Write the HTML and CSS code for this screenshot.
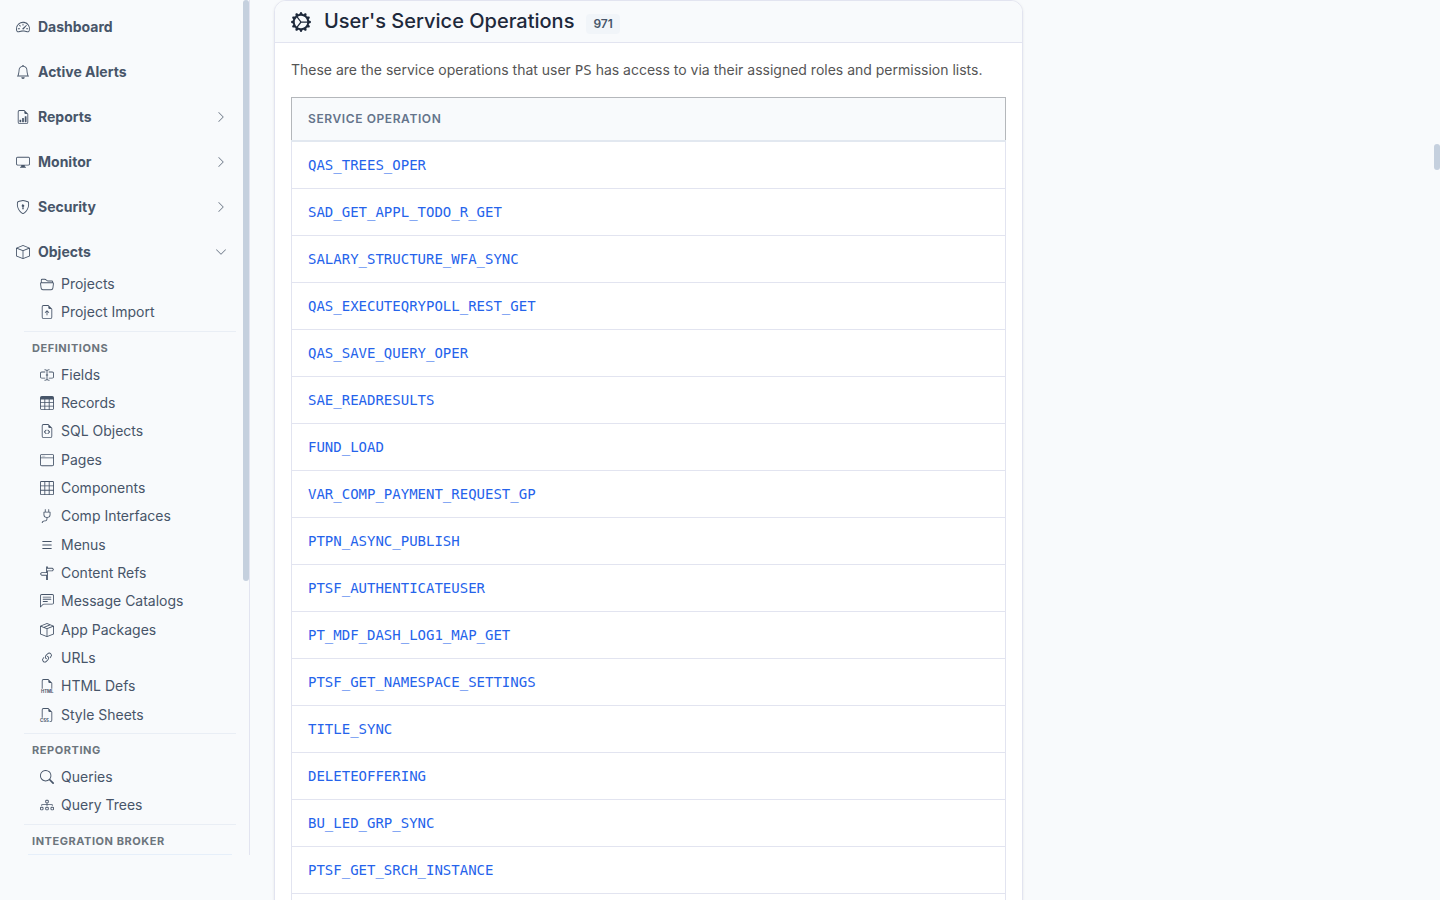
FILE: index.html
```html
<!DOCTYPE html>
<html lang="en">
<head>
    <meta charset="utf-8">
    <meta name="viewport" content="width=device-width, initial-scale=1">
    <title>User's Service Operations</title>
    <link rel="stylesheet" href="styles.css">
</head>
<body>
    <div class="layout">
        <aside class="sidebar">
            <nav class="sidebar-nav">
                <ul class="menu">
                    <li>
                        <a href="#" class="menu-link">
                            <svg class="icon" viewBox="0 0 16 16"><path d="M8 4a.5.5 0 0 1 .5.5V6a.5.5 0 0 1-1 0V4.5A.5.5 0 0 1 8 4M3.732 5.732a.5.5 0 0 1 .707 0l.915.914a.5.5 0 1 1-.708.708l-.914-.915a.5.5 0 0 1 0-.707M2 10a.5.5 0 0 1 .5-.5h1.586a.5.5 0 0 1 0 1H2.5A.5.5 0 0 1 2 10m9.5 0a.5.5 0 0 1 .5-.5h1.5a.5.5 0 0 1 0 1H12a.5.5 0 0 1-.5-.5m.754-4.246a.39.39 0 0 0-.527-.02L7.547 9.31a.91.91 0 1 0 1.302 1.258l3.434-4.297a.39.39 0 0 0-.029-.518z"/><path fill-rule="evenodd" d="M0 10a8 8 0 1 1 15.547 2.661c-.442 1.253-1.845 1.602-2.932 1.25C11.309 13.488 9.475 13 8 13c-1.474 0-3.31.488-4.615.911-1.087.352-2.49.003-2.932-1.25A8 8 0 0 1 0 10m8-7a7 7 0 0 0-6.603 9.329c.203.575.923.876 1.68.63C4.397 12.533 6.358 12 8 12s3.604.532 4.923.96c.757.245 1.477-.056 1.68-.631A7 7 0 0 0 8 3"/></svg>
                            <span>Dashboard</span>
                        </a>
                    </li>
                    <li>
                        <a href="#" class="menu-link">
                            <svg class="icon" viewBox="0 0 16 16"><path d="M8 16a2 2 0 0 0 2-2H6a2 2 0 0 0 2 2M8 1.918l-.797.161A4 4 0 0 0 4 6c0 .628-.134 2.197-.459 3.742-.16.767-.376 1.566-.663 2.258h10.244c-.287-.692-.502-1.49-.663-2.258C12.134 8.197 12 6.628 12 6a4 4 0 0 0-3.203-3.92zM14.22 12c.223.447.481.801.78 1H1c.299-.199.557-.553.78-1C2.68 10.2 3 6.88 3 6c0-2.42 1.72-4.44 4.005-4.901a1 1 0 1 1 1.99 0A5 5 0 0 1 13 6c0 .88.32 4.2 1.22 6"/></svg>
                            <span>Active Alerts</span>
                        </a>
                    </li>
                    <li>
                        <button type="button" class="menu-link" aria-expanded="false">
                            <svg class="icon" viewBox="0 0 16 16"><path d="M10 13.5a.5.5 0 0 0 .5.5h1a.5.5 0 0 0 .5-.5v-6a.5.5 0 0 0-.5-.5h-1a.5.5 0 0 0-.5.5zm-2.5.5a.5.5 0 0 1-.5-.5v-4a.5.5 0 0 1 .5-.5h1a.5.5 0 0 1 .5.5v4a.5.5 0 0 1-.5.5zm-3 0a.5.5 0 0 1-.5-.5v-2a.5.5 0 0 1 .5-.5h1a.5.5 0 0 1 .5.5v2a.5.5 0 0 1-.5.5z"/><path d="M14 14V4.5L9.5 0H4a2 2 0 0 0-2 2v12a2 2 0 0 0 2 2h8a2 2 0 0 0 2-2M9.5 3A1.5 1.5 0 0 0 11 4.5h2V14a1 1 0 0 1-1 1H4a1 1 0 0 1-1-1V2a1 1 0 0 1 1-1h5.5z"/></svg>
                            <span>Reports</span>
                            <svg class="chevron" viewBox="0 0 16 16"><path d="M4.646 1.646a.5.5 0 0 1 .708 0l6 6a.5.5 0 0 1 0 .708l-6 6a.5.5 0 0 1-.708-.708L10.293 8 4.646 2.354a.5.5 0 0 1 0-.708"/></svg>
                        </button>
                    </li>
                    <li>
                        <button type="button" class="menu-link" aria-expanded="false">
                            <svg class="icon" viewBox="0 0 16 16"><path d="M0 4s0-2 2-2h12s2 0 2 2v6s0 2-2 2h-4q0 1 .25 1.5H11a.5.5 0 0 1 0 1H5a.5.5 0 0 1 0-1h.75Q6 13 6 12H2s-2 0-2-2zm1.398-.855a.8.8 0 0 0-.254.302A1.5 1.5 0 0 0 1 4.01V10c0 .325.078.502.145.602q.105.156.302.254a1.5 1.5 0 0 0 .538.143L2.01 11H14c.325 0 .502-.078.602-.145a.8.8 0 0 0 .254-.302 1.5 1.5 0 0 0 .143-.538L15 9.99V4c0-.325-.078-.502-.145-.602a.8.8 0 0 0-.302-.254A1.5 1.5 0 0 0 13.99 3H2c-.325 0-.502.078-.602.145"/></svg>
                            <span>Monitor</span>
                            <svg class="chevron" viewBox="0 0 16 16"><path d="M4.646 1.646a.5.5 0 0 1 .708 0l6 6a.5.5 0 0 1 0 .708l-6 6a.5.5 0 0 1-.708-.708L10.293 8 4.646 2.354a.5.5 0 0 1 0-.708"/></svg>
                        </button>
                    </li>
                    <li>
                        <button type="button" class="menu-link" aria-expanded="false">
                            <svg class="icon" viewBox="0 0 16 16"><path d="M5.338 1.59a61 61 0 0 0-2.837.856.48.48 0 0 0-.328.39c-.554 4.157.726 7.19 2.253 9.188a10.7 10.7 0 0 0 2.287 2.233c.346.244.652.42.893.533q.18.085.293.118a1 1 0 0 0 .101.025 1 1 0 0 0 .1-.025q.114-.034.294-.118c.24-.113.547-.29.893-.533a10.7 10.7 0 0 0 2.287-2.233c1.527-1.997 2.807-5.031 2.253-9.188a.48.48 0 0 0-.328-.39c-.651-.213-1.75-.56-2.837-.855C9.552 1.29 8.531 1.067 8 1.067c-.53 0-1.552.223-2.662.524zM5.072.56C6.157.265 7.31 0 8 0s1.843.265 2.928.56c1.11.3 2.229.655 2.887.87a1.54 1.54 0 0 1 1.044 1.262c.596 4.477-.787 7.795-2.465 9.99a11.8 11.8 0 0 1-2.517 2.453 7 7 0 0 1-1.048.625c-.28.132-.581.24-.829.24s-.548-.108-.829-.24a7 7 0 0 1-1.048-.625 11.8 11.8 0 0 1-2.517-2.453C1.928 10.487.545 7.169 1.141 2.692A1.54 1.54 0 0 1 2.185 1.43 63 63 0 0 1 5.072.56"/><path d="M9.5 6.5a1.5 1.5 0 0 1-1 1.415l.385 1.99a.5.5 0 0 1-.491.595h-.788a.5.5 0 0 1-.49-.595l.384-1.99a1.5 1.5 0 1 1 2-1.415"/></svg>
                            <span>Security</span>
                            <svg class="chevron" viewBox="0 0 16 16"><path d="M4.646 1.646a.5.5 0 0 1 .708 0l6 6a.5.5 0 0 1 0 .708l-6 6a.5.5 0 0 1-.708-.708L10.293 8 4.646 2.354a.5.5 0 0 1 0-.708"/></svg>
                        </button>
                    </li>
                    <li>
                        <button type="button" class="menu-link" aria-expanded="true">
                            <svg class="icon" viewBox="0 0 16 16"><path d="M8.186 1.113a.5.5 0 0 0-.372 0L1.846 3.5 8 5.961 14.154 3.5zM15 4.239l-6.5 2.6v7.922l6.5-2.6V4.24zM7.5 14.762V6.838L1 4.239v7.923zM7.443.184a1.5 1.5 0 0 1 1.114 0l7.129 2.852A.5.5 0 0 1 16 3.5v8.662a1 1 0 0 1-.629.928l-7.185 2.874a.5.5 0 0 1-.372 0L.63 13.09a1 1 0 0 1-.63-.928V3.5a.5.5 0 0 1 .314-.464z"/></svg>
                            <span>Objects</span>
                            <svg class="chevron" viewBox="0 0 16 16"><path d="M1.646 4.646a.5.5 0 0 1 .708 0L8 10.293l5.646-5.647a.5.5 0 0 1 .708.708l-6 6a.5.5 0 0 1-.708 0l-6-6a.5.5 0 0 1 0-.708"/></svg>
                        </button>
                        <ul class="submenu">
                            <li><a href="#" class="submenu-link">
                                <svg class="icon" viewBox="0 0 16 16"><path d="M1 3.5A1.5 1.5 0 0 1 2.5 2h2.764c.958 0 1.76.56 2.311 1.184C7.985 3.648 8.48 4 9 4h4.5A1.5 1.5 0 0 1 15 5.5v.64c.57.265.94.876.856 1.546l-.64 5.124A2.5 2.5 0 0 1 12.733 15H3.266a2.5 2.5 0 0 1-2.481-2.19l-.64-5.124A1.5 1.5 0 0 1 1 6.14zM2 6h12v-.5a.5.5 0 0 0-.5-.5H9c-.964 0-1.71-.629-2.174-1.154C6.374 3.334 5.82 3 5.264 3H2.5a.5.5 0 0 0-.5.5zm-.367 1a.5.5 0 0 0-.496.562l.64 5.124A1.5 1.5 0 0 0 3.266 14h9.468a1.5 1.5 0 0 0 1.489-1.314l.64-5.124A.5.5 0 0 0 14.367 7z"/></svg>
                                <span>Projects</span></a></li>
                            <li><a href="#" class="submenu-link">
                                <svg class="icon" viewBox="0 0 16 16"><path d="M8.5 11.5a.5.5 0 0 1-1 0V7.707L6.354 8.854a.5.5 0 1 1-.708-.708l2-2a.5.5 0 0 1 .708 0l2 2a.5.5 0 0 1-.708.708L8.5 7.707z"/><path d="M14 14V4.5L9.5 0H4a2 2 0 0 0-2 2v12a2 2 0 0 0 2 2h8a2 2 0 0 0 2-2M9.5 3A1.5 1.5 0 0 0 11 4.5h2V14a1 1 0 0 1-1 1H4a1 1 0 0 1-1-1V2a1 1 0 0 1 1-1h5.5z"/></svg>
                                <span>Project Import</span></a></li>
                            <li class="submenu-title">Definitions</li>
                            <li><a href="#" class="submenu-link">
                                <svg class="icon" viewBox="0 0 16 16"><path d="M5 2a.5.5 0 0 1 .5-.5c.862 0 1.573.287 2.06.566.174.099.321.198.44.286.119-.088.266-.187.44-.286A4.17 4.17 0 0 1 10.5 1.5a.5.5 0 0 1 0 1c-.638 0-1.177.213-1.564.434a3.5 3.5 0 0 0-.436.294V7.5H9a.5.5 0 0 1 0 1h-.5v4.272c.1.08.248.187.436.294.387.221.926.434 1.564.434a.5.5 0 0 1 0 1 4.17 4.17 0 0 1-2.06-.566A5 5 0 0 1 8 13.65a5 5 0 0 1-.44.285 4.17 4.17 0 0 1-2.06.566.5.5 0 0 1 0-1c.638 0 1.177-.213 1.564-.434.188-.107.335-.214.436-.294V8.5H7a.5.5 0 0 1 0-1h.5V3.228a3.5 3.5 0 0 0-.436-.294A3.17 3.17 0 0 0 5.5 2.5.5.5 0 0 1 5 2"/><path d="M10 5h4a1 1 0 0 1 1 1v4a1 1 0 0 1-1 1h-4v1h4a2 2 0 0 0 2-2V6a2 2 0 0 0-2-2h-4zM6 5V4H2a2 2 0 0 0-2 2v4a2 2 0 0 0 2 2h4v-1H2a1 1 0 0 1-1-1V6a1 1 0 0 1 1-1z"/></svg>
                                <span>Fields</span></a></li>
                            <li><a href="#" class="submenu-link">
                                <svg class="icon" viewBox="0 0 16 16"><path d="M0 2a2 2 0 0 1 2-2h12a2 2 0 0 1 2 2v12a2 2 0 0 1-2 2H2a2 2 0 0 1-2-2zm15 2h-4v3h4zm0 4h-4v3h4zm0 4h-4v3h3a1 1 0 0 0 1-1zm-5 3v-3H6v3zm-5 0v-3H1v2a1 1 0 0 0 1 1zm-4-4h4V8H1zm0-4h4V4H1zm5-3v3h4V4zm4 4H6v3h4z"/></svg>
                                <span>Records</span></a></li>
                            <li><a href="#" class="submenu-link">
                                <svg class="icon" viewBox="0 0 16 16"><path d="M14 4.5V14a2 2 0 0 1-2 2H4a2 2 0 0 1-2-2V2a2 2 0 0 1 2-2h5.5zm-3 0A1.5 1.5 0 0 1 9.5 3V1H4a1 1 0 0 0-1 1v12a1 1 0 0 0 1 1h8a1 1 0 0 0 1-1V4.5z"/><path d="M8.646 6.646a.5.5 0 0 1 .708 0l2 2a.5.5 0 0 1 0 .708l-2 2a.5.5 0 0 1-.708-.708L10.293 9 8.646 7.354a.5.5 0 0 1 0-.708m-1.292 0a.5.5 0 0 0-.708 0l-2 2a.5.5 0 0 0 0 .708l2 2a.5.5 0 0 0 .708-.708L5.707 9l1.647-1.646a.5.5 0 0 0 0-.708"/></svg>
                                <span>SQL Objects</span></a></li>
                            <li><a href="#" class="submenu-link">
                                <svg class="icon" viewBox="0 0 16 16"><path d="M2.5 4a.5.5 0 1 0 0-1 .5.5 0 0 0 0 1m2-.5a.5.5 0 1 1-1 0 .5.5 0 0 1 1 0m1 .5a.5.5 0 1 0 0-1 .5.5 0 0 0 0 1"/><path d="M2 1a2 2 0 0 0-2 2v10a2 2 0 0 0 2 2h12a2 2 0 0 0 2-2V3a2 2 0 0 0-2-2zm13 2v2H1V3a1 1 0 0 1 1-1h12a1 1 0 0 1 1 1M2 14a1 1 0 0 1-1-1V6h14v7a1 1 0 0 1-1 1z"/></svg>
                                <span>Pages</span></a></li>
                            <li><a href="#" class="submenu-link">
                                <svg class="icon" viewBox="0 0 16 16"><path d="M0 1.5A1.5 1.5 0 0 1 1.5 0h13A1.5 1.5 0 0 1 16 1.5v13a1.5 1.5 0 0 1-1.5 1.5h-13A1.5 1.5 0 0 1 0 14.5zM1.5 1a.5.5 0 0 0-.5.5V5h4V1zM5 6H1v4h4zm1 4h4V6H6zm-1 1H1v3.5a.5.5 0 0 0 .5.5H5zm1 0v4h4v-4zm5 0v4h3.5a.5.5 0 0 0 .5-.5V11zm0-1h4V6h-4zm0-5h4V1.5a.5.5 0 0 0-.5-.5H11zm-1 0V1H6v4z"/></svg>
                                <span>Components</span></a></li>
                            <li><a href="#" class="submenu-link">
                                <svg class="icon" viewBox="0 0 16 16"><path d="M6 0a.5.5 0 0 1 .5.5V3h3V.5a.5.5 0 0 1 1 0V3h1a.5.5 0 0 1 .5.5v3A3.5 3.5 0 0 1 8.5 10c-.002.434-.01.845-.04 1.22-.041.514-.126 1.003-.317 1.424a2.08 2.08 0 0 1-.97 1.028C6.725 13.9 6.169 14 5.5 14c-.998 0-1.61.33-1.974.718A1.92 1.92 0 0 0 3 16H2c0-.616.232-1.367.797-1.968C3.374 13.42 4.261 13 5.5 13c.581 0 .962-.088 1.218-.219.241-.123.4-.3.514-.55.121-.266.193-.621.23-1.09.027-.34.035-.718.037-1.141A3.5 3.5 0 0 1 4 6.5v-3a.5.5 0 0 1 .5-.5h1V.5A.5.5 0 0 1 6 0M5 4v2.5A2.5 2.5 0 0 0 7.5 9h1A2.5 2.5 0 0 0 11 6.5V4z"/></svg>
                                <span>Comp Interfaces</span></a></li>
                            <li><a href="#" class="submenu-link">
                                <svg class="icon" viewBox="0 0 16 16"><path d="M2.5 12a.5.5 0 0 1 .5-.5h10a.5.5 0 0 1 0 1H3a.5.5 0 0 1-.5-.5m0-4a.5.5 0 0 1 .5-.5h10a.5.5 0 0 1 0 1H3a.5.5 0 0 1-.5-.5m0-4a.5.5 0 0 1 .5-.5h10a.5.5 0 0 1 0 1H3a.5.5 0 0 1-.5-.5"/></svg>
                                <span>Menus</span></a></li>
                            <li><a href="#" class="submenu-link">
                                <svg class="icon" viewBox="0 0 16 16"><path d="M7 7V1.414a1 1 0 0 1 2 0V2h5a1 1 0 0 1 .8.4l.975 1.3a.5.5 0 0 1 0 .6L14.8 5.6a1 1 0 0 1-.8.4H9v10H7v-5H2a1 1 0 0 1-.8-.4L.225 9.3a.5.5 0 0 1 0-.6L1.2 7.4A1 1 0 0 1 2 7zm1 3V8H2l-.75 1L2 10zm0-5h6l.75-1L14 3H8z"/></svg>
                                <span>Content Refs</span></a></li>
                            <li><a href="#" class="submenu-link">
                                <svg class="icon" viewBox="0 0 16 16"><path d="M14 1a1 1 0 0 1 1 1v8a1 1 0 0 1-1 1H4.414A2 2 0 0 0 3 11.586l-2 2V2a1 1 0 0 1 1-1zM2 0a2 2 0 0 0-2 2v12.793a.5.5 0 0 0 .854.353l2.853-2.853A1 1 0 0 1 4.414 12H14a2 2 0 0 0 2-2V2a2 2 0 0 0-2-2z"/><path d="M3 3.5a.5.5 0 0 1 .5-.5h9a.5.5 0 0 1 0 1h-9a.5.5 0 0 1-.5-.5M3 6a.5.5 0 0 1 .5-.5h9a.5.5 0 0 1 0 1h-9A.5.5 0 0 1 3 6m0 2.5a.5.5 0 0 1 .5-.5h5a.5.5 0 0 1 0 1h-5a.5.5 0 0 1-.5-.5"/></svg>
                                <span>Message Catalogs</span></a></li>
                            <li><a href="#" class="submenu-link">
                                <svg class="icon" viewBox="0 0 16 16"><path d="M8.186 1.113a.5.5 0 0 0-.372 0L1.846 3.5l2.404.961L10.404 2zm3.564 1.426L5.596 5 8 5.961 14.154 3.5zm3.25 1.7-6.5 2.6v7.922l6.5-2.6V4.24zM7.5 14.762V6.838L1 4.239v7.923zM7.443.184a1.5 1.5 0 0 1 1.114 0l7.129 2.852A.5.5 0 0 1 16 3.5v8.662a1 1 0 0 1-.629.928l-7.185 2.874a.5.5 0 0 1-.372 0L.63 13.09a1 1 0 0 1-.63-.928V3.5a.5.5 0 0 1 .314-.464z"/></svg>
                                <span>App Packages</span></a></li>
                            <li><a href="#" class="submenu-link">
                                <svg class="icon" viewBox="0 0 16 16"><path d="M4.715 6.542 3.343 7.914a3 3 0 1 0 4.243 4.243l1.828-1.829A3 3 0 0 0 8.586 5.5L8 6.086a1 1 0 0 0-.154.199 2 2 0 0 1 .861 3.337L6.88 11.45a2 2 0 1 1-2.83-2.83l.793-.792a4 4 0 0 1-.128-1.287z"/><path d="M6.586 4.672A3 3 0 0 0 7.414 9.5l.775-.776a2 2 0 0 1-.896-3.346L9.12 3.55a2 2 0 1 1 2.83 2.83l-.793.792c.112.42.155.855.128 1.287l1.372-1.372a3 3 0 1 0-4.243-4.243z"/></svg>
                                <span>URLs</span></a></li>
                            <li><a href="#" class="submenu-link">
                                <svg class="icon" viewBox="0 0 16 16"><path d="M14 4.5V11h-1V4.5h-2A1.5 1.5 0 0 1 9.5 3V1H4a1 1 0 0 0-1 1v9H2V2a2 2 0 0 1 2-2h5.5z"/><text class="filetype" x="1" y="16">HTML</text></svg>
                                <span>HTML Defs</span></a></li>
                            <li><a href="#" class="submenu-link">
                                <svg class="icon" viewBox="0 0 16 16"><path d="M14 4.5V14a2 2 0 0 1-2 2h-1v-1h1a1 1 0 0 0 1-1V4.5h-2A1.5 1.5 0 0 1 9.5 3V1H4a1 1 0 0 0-1 1v9H2V2a2 2 0 0 1 2-2h5.5z"/><text class="filetype" x="0" y="16">CSS</text></svg>
                                <span>Style Sheets</span></a></li>
                            <li class="submenu-title">Reporting</li>
                            <li><a href="#" class="submenu-link">
                                <svg class="icon" viewBox="0 0 16 16"><path d="M11.742 10.344a6.5 6.5 0 1 0-1.397 1.398h-.001q.044.06.098.115l3.85 3.85a1 1 0 0 0 1.415-1.414l-3.85-3.85a1 1 0 0 0-.115-.1zM12 6.5a5.5 5.5 0 1 1-11 0 5.5 5.5 0 0 1 11 0"/></svg>
                                <span>Queries</span></a></li>
                            <li><a href="#" class="submenu-link">
                                <svg class="icon" viewBox="0 0 16 16"><path fill-rule="evenodd" d="M6 3.5A1.5 1.5 0 0 1 7.5 2h1A1.5 1.5 0 0 1 10 3.5v1A1.5 1.5 0 0 1 8.5 6v1H14a.5.5 0 0 1 .5.5v1a.5.5 0 0 1-1 0V8h-5v.5a.5.5 0 0 1-1 0V8h-5v.5a.5.5 0 0 1-1 0v-1A.5.5 0 0 1 2 7h5.5V6A1.5 1.5 0 0 1 6 4.5zM8.5 5a.5.5 0 0 0 .5-.5v-1a.5.5 0 0 0-.5-.5h-1a.5.5 0 0 0-.5.5v1a.5.5 0 0 0 .5.5zM0 11.5A1.5 1.5 0 0 1 1.5 10h1A1.5 1.5 0 0 1 4 11.5v1A1.5 1.5 0 0 1 2.5 14h-1A1.5 1.5 0 0 1 0 12.5zm1.5-.5a.5.5 0 0 0-.5.5v1a.5.5 0 0 0 .5.5h1a.5.5 0 0 0 .5-.5v-1a.5.5 0 0 0-.5-.5zm4.5.5A1.5 1.5 0 0 1 7.5 10h1a1.5 1.5 0 0 1 1.5 1.5v1A1.5 1.5 0 0 1 8.5 14h-1A1.5 1.5 0 0 1 6 12.5zm1.5-.5a.5.5 0 0 0-.5.5v1a.5.5 0 0 0 .5.5h1a.5.5 0 0 0 .5-.5v-1a.5.5 0 0 0-.5-.5zm4.5.5a1.5 1.5 0 0 1 1.5-1.5h1a1.5 1.5 0 0 1 1.5 1.5v1a1.5 1.5 0 0 1-1.5 1.5h-1a1.5 1.5 0 0 1-1.5-1.5zm1.5-.5a.5.5 0 0 0-.5.5v1a.5.5 0 0 0 .5.5h1a.5.5 0 0 0 .5-.5v-1a.5.5 0 0 0-.5-.5z"/></svg>
                                <span>Query Trees</span></a></li>
                            <li class="submenu-title">Integration Broker</li>
                            <li class="submenu-end"></li>
                        </ul>
                    </li>
                </ul>
            </nav>
            <div class="sidebar-thumb"></div>
        </aside>

        <main class="content">
            <section class="card">
                <header class="card-header">
                    <svg class="card-icon" viewBox="0 0 16 16"><path d="M7.068.727c.243-.97 1.62-.97 1.864 0l.071.286a.96.96 0 0 0 1.622.434l.205-.211c.695-.719 1.888-.03 1.613.931l-.08.284a.96.96 0 0 0 1.187 1.187l.283-.081c.96-.275 1.65.918.931 1.613l-.211.205a.96.96 0 0 0 .434 1.622l.286.071c.97.243.97 1.62 0 1.864l-.286.071a.96.96 0 0 0-.434 1.622l.211.205c.719.695.03 1.888-.931 1.613l-.284-.08a.96.96 0 0 0-1.187 1.187l.081.283c.275.96-.918 1.65-1.613.931l-.205-.211a.96.96 0 0 0-1.622.434l-.071.286c-.243.97-1.62.97-1.864 0l-.071-.286a.96.96 0 0 0-1.622-.434l-.205.211c-.695.719-1.888.03-1.613-.931l.08-.284a.96.96 0 0 0-1.186-1.187l-.284.081c-.96.275-1.65-.918-.931-1.613l.211-.205a.96.96 0 0 0-.434-1.622l-.286-.071c-.97-.243-.97-1.62 0-1.864l.286-.071a.96.96 0 0 0 .434-1.622l-.211-.205c-.719-.695-.03-1.888.931-1.613l.284.08a.96.96 0 0 0 1.187-1.186l-.081-.284c-.275-.96.918-1.65 1.613-.931l.205.211a.96.96 0 0 0 1.622-.434zM12.973 8.5H8.25l-2.834 3.779A4.998 4.998 0 0 0 12.973 8.5m0-1a4.998 4.998 0 0 0-7.557-3.779l2.834 3.78zM5.048 3.967l-.087.065zm-.431.355A4.98 4.98 0 0 0 3.002 8c0 1.455.622 2.765 1.615 3.678L7.375 8zm.344 7.646.087.065z"/></svg>
                    <h2 class="card-title">User's Service Operations</h2>
                    <span class="badge">971</span>
                </header>
                <div class="card-body">
                    <p class="card-text">These are the service operations that user <code>PS</code> has access to via their assigned roles and permission lists.</p>
                    <table class="table">
                        <thead>
                            <tr><th scope="col">Service Operation</th></tr>
                        </thead>
                        <tbody>
                            <tr><td><a href="#">QAS_TREES_OPER</a></td></tr>
                            <tr><td><a href="#">SAD_GET_APPL_TODO_R_GET</a></td></tr>
                            <tr><td><a href="#">SALARY_STRUCTURE_WFA_SYNC</a></td></tr>
                            <tr><td><a href="#">QAS_EXECUTEQRYPOLL_REST_GET</a></td></tr>
                            <tr><td><a href="#">QAS_SAVE_QUERY_OPER</a></td></tr>
                            <tr><td><a href="#">SAE_READRESULTS</a></td></tr>
                            <tr><td><a href="#">FUND_LOAD</a></td></tr>
                            <tr><td><a href="#">VAR_COMP_PAYMENT_REQUEST_GP</a></td></tr>
                            <tr><td><a href="#">PTPN_ASYNC_PUBLISH</a></td></tr>
                            <tr><td><a href="#">PTSF_AUTHENTICATEUSER</a></td></tr>
                            <tr><td><a href="#">PT_MDF_DASH_LOG1_MAP_GET</a></td></tr>
                            <tr><td><a href="#">PTSF_GET_NAMESPACE_SETTINGS</a></td></tr>
                            <tr><td><a href="#">TITLE_SYNC</a></td></tr>
                            <tr><td><a href="#">DELETEOFFERING</a></td></tr>
                            <tr><td><a href="#">BU_LED_GRP_SYNC</a></td></tr>
                            <tr><td><a href="#">PTSF_GET_SRCH_INSTANCE</a></td></tr>
                            <tr><td></td></tr>
                        </tbody>
                    </table>
                </div>
            </section>
        </main>
    </div>
    <div class="page-thumb"></div>
</body>
</html>
```

FILE: styles.css
```css
* {
    box-sizing: border-box;
}
body {
    margin: 0;
    font-family: Inter, "Liberation Sans", sans-serif;
    font-size: 14px;
    line-height: 1.6;
    color: #334155;
    background-color: #f8fafc;
}
ul {
    list-style: none;
    margin: 0;
    padding: 0;
}
a {
    text-decoration: none;
}
svg {
    fill: currentColor;
    flex-shrink: 0;
}
.layout {
    display: flex;
    align-items: flex-start;
    padding-right: 6px;
}

/* sidebar */
.sidebar {
    position: sticky;
    top: 0;
    flex: 0 0 250px;
    height: calc(100vh - 45px);
    overflow: hidden;
    border-right: 1px solid #e2e4f0;
}
.sidebar-nav {
    padding: 8px 6px 0 0;
}
.menu-link {
    display: flex;
    align-items: center;
    gap: 8px;
    width: 100%;
    margin-bottom: 8px;
    padding: 8px 16px;
    border: none;
    background: none;
    color: #475569;
    font-family: inherit;
    font-size: 14px;
    font-weight: 700;
    line-height: 21px;
    text-align: left;
    cursor: pointer;
}
.menu-link[aria-expanded="true"] {
    margin-bottom: 0;
}
.icon {
    width: 14px;
    height: 14px;
    overflow: visible;
}
.chevron {
    width: 12px;
    height: 12px;
    margin-left: auto;
    opacity: 0.8;
}
.submenu {
    padding: 0 7px 0 24px;
}
.submenu-link {
    display: flex;
    align-items: center;
    gap: 7px;
    padding: 3px 16px;
    color: #475569;
    line-height: 1.595;
}
.submenu-title {
    margin-top: 4px;
    padding: 8px 8px 4px;
    border-top: 1px solid #e9eef5;
    color: #6c757d;
    font-size: 11px;
    font-weight: 700;
    line-height: 17px;
    letter-spacing: 0.05em;
    text-transform: uppercase;
}
.submenu-end {
    margin: 0 4px;
    border-top: 1px solid #e6effa;
}
.filetype {
    font-size: 5px;
    font-weight: 700;
}

/* scroll thumbs */
.sidebar-thumb {
    position: absolute;
    top: 0;
    right: 0;
    width: 6px;
    height: 68%;
    border-radius: 3px;
    background-color: #c5d0de;
}
.page-thumb {
    position: fixed;
    top: 16%;
    right: 0;
    width: 6px;
    height: 26px;
    border-radius: 3px;
    background-color: #c5d0de;
}

/* content */
.content {
    flex: 1;
    display: grid;
    grid-template-columns: repeat(12, 1fr);
    gap: 24px;
    padding: 0 24px 24px;
}
.card {
    grid-column: span 8;
    border: 1px solid #e2e4f0;
    border-radius: 12px;
    background-color: #fff;
    box-shadow: 0 1px 3px rgba(0, 0, 0, 0.08);
    overflow: hidden;
}
.card-header {
    display: flex;
    align-items: center;
    padding: 4px 16px;
    border-bottom: 1px solid #e2e4f0;
    background-color: #f8fafc;
    color: #1e293b;
}
.card-icon {
    width: 20px;
    height: 20px;
    margin-right: 13px;
}
.card-title {
    margin: 0;
    font-size: 20px;
    font-weight: 500;
    line-height: 33px;
}
.badge {
    margin: 5px 0 0 12px;
    padding: 4px 7px;
    border-radius: 4px;
    background-color: #f1f5f9;
    color: #475569;
    font-size: 12px;
    font-weight: 600;
    line-height: 12px;
}
.card-body {
    padding: 16px;
}
.card-text {
    margin: 0 0 16px;
    color: #555;
    line-height: 22px;
}
.card-text code,
.table td a {
    font-family: "DejaVu Sans Mono", monospace;
    font-size: 14px;
}
.table {
    width: 100%;
    border-collapse: collapse;
}
.table thead {
    border: 1px solid #b4b7bb;
}
.table th {
    padding: 12px 16px;
    border-bottom: 2px solid #e2e8f0;
    background-color: #f8fafc;
    color: #64748b;
    font-size: 12px;
    font-weight: 600;
    line-height: 18px;
    letter-spacing: 0.05em;
    text-align: left;
    text-transform: uppercase;
}
.table td {
    height: 47px;
    padding: 12px 16px;
    border: 1px solid #e2e4f0;
    line-height: 22px;
}
.table td a {
    color: #2563eb;
}
```
